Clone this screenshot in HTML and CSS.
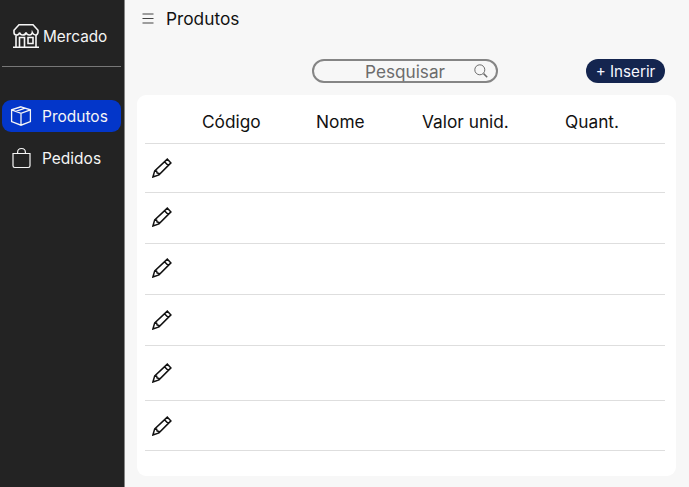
FILE: index.html
```html
<!DOCTYPE html>
<html lang="pt-BR">
<head>
<meta charset="utf-8">
<title>Produtos</title>
<link rel="stylesheet" href="styles.css">
</head>
<body>
<svg class="defs" aria-hidden="true">
  <symbol id="pencil" viewBox="0 0 20 20">
    <path d="M.9 19 2.7 12.9 15.3 1.1 18.9 4.9 7 16.9ZM2.7 12.9 4.6 13.2 5.2 15 6.8 15.3 7 16.9M12.5 3.7 16.2 7.5"/><path class="tip" d="M.9 19 1.5 16.9 3 18.4Z"/>
  </symbol>
</svg>
<div class="app">
  <aside class="sidebar">
    <div class="brand">
      <svg class="store" viewBox="0 0 26 25"><path d="M6 .8H20L25 6.3V8.5Q24.5 11 22.5 11T19.3 8.5Q19 11 16.4 11T13 8.5Q12.6 11 9.8 11T6.7 8.5Q6 11 3.5 11T1 8.5V6.3ZM3 11.5V23M23 11.5V23M0 23.3H26M6.5 23V13.5H11.5V23M15 13.5H20V19.5H15Z"/></svg>
      <span>Mercado</span>
    </div>
    <nav class="menu">
      <a class="item active">
        <svg class="box" viewBox="0 0 22 20"><path d="M11 .8 20.4 3.8V15.5L11 19.2 1.6 15.5V3.8ZM1.6 3.8 11 7.4 20.4 3.8M11 7.4V19.2M5.8 5.4 15.2 2.1"/></svg>
        <span>Produtos</span>
      </a>
      <a class="item">
        <svg class="bag" viewBox="0 0 22 22"><path d="M3 6.5H20V18.8Q20 20.5 18.3 20.5H4.7Q3 20.5 3 18.8ZM7.6 6.5V5.4Q7.6 1.5 11.5 1.5T15.4 5.4V6.5"/></svg>
        <span>Pedidos</span>
      </a>
    </nav>
  </aside>
  <main class="main">
    <header class="topbar">
      <svg class="burger" viewBox="0 0 12 11"><path d="M.5 1H11.5M.5 5.5H11.5M.5 10H11.5"/></svg>
      <h1>Produtos</h1>
    </header>
    <div class="tools">
      <div class="search">
        <span>Pesquisar</span>
        <svg class="lens" viewBox="0 0 14 14"><circle cx="5.8" cy="5.8" r="5"/><path class="handle" d="M9.6 9.6 13.2 13.2"/></svg>
      </div>
      <button class="insert">+ Inserir</button>
    </div>
    <section class="card">
      <div class="head"><span></span><span>Código</span><span>Nome</span><span>Valor unid.</span><span>Quant.</span></div>
      <div class="row r1"><svg class="pencil"><use href="#pencil"/></svg></div>
      <div class="row r2 high"><svg class="pencil"><use href="#pencil"/></svg></div>
      <div class="row r2 high"><svg class="pencil"><use href="#pencil"/></svg></div>
      <div class="row r2"><svg class="pencil"><use href="#pencil"/></svg></div>
      <div class="row r3"><svg class="pencil"><use href="#pencil"/></svg></div>
      <div class="row r4"><svg class="pencil"><use href="#pencil"/></svg></div>
    </section>
  </main>
</div>
</body>
</html>
```
FILE: styles.css
```css
* { box-sizing: border-box; }
body { margin: 0; font-family: Inter, "Liberation Sans", sans-serif; color: #111; }
svg { display: block; flex: none; fill: none; stroke: currentColor; }
.defs { display: none; }
.app { display: flex; width: 689px; height: 487px; background: #f7f7f7; overflow: hidden; }

.sidebar { width: 125px; flex: none; padding: 0 3px 0 2px; background: #232323; border-right: 1px solid #858585; color: #f5f5f5; font-size: 15.5px; }
.brand { display: flex; align-items: center; height: 67px; padding: 6px 0 0 11px; gap: 4px; border-bottom: 1px solid #777; font-size: 15.3px; }
.store { width: 26px; height: 25px; stroke-width: 1.6; }
.menu { padding-top: 33px; }
.item { display: flex; align-items: center; height: 32px; padding-left: 8px; gap: 10px; border-radius: 9px; }
.item + .item { margin-top: 10px; }
.active { background: #0336c9; }
.box { width: 22px; height: 20px; stroke-width: 1.3; }
.bag { width: 22px; height: 22px; stroke-width: 1.2; }

.main { flex: 1; padding: 0 13px 0 12px; }
.topbar { display: flex; align-items: center; height: 37px; padding-left: 5px; gap: 12px; }
.topbar h1 { margin: 0; font-size: 17.3px; font-weight: 400; }
.burger { width: 12px; height: 11px; stroke: #444; stroke-width: 1.2; }
.tools { display: flex; justify-content: space-between; align-items: center; height: 24px; margin: 22px 11px 12px 175px; }
.search { display: flex; align-items: center; justify-content: space-between; width: 186px; height: 24px; padding: 0 8px 0 51px; border: 2px solid #858585; border-radius: 12px; color: #6c6c6c; font-size: 17.2px; }
.lens { width: 14px; height: 14px; stroke-width: 1; }
.handle { stroke-width: 1.5; }
.insert { width: 79px; height: 24px; padding: 0; border: 0; border-radius: 12px; background: #14254f; color: #f5f7ff; font: 400 15.2px Inter, sans-serif; }

.card { height: 381px; padding: 0 11px 0 8px; border-radius: 9px; background: #fff; }
.head, .row { border-bottom: 1px solid #dedede; }
.head { display: grid; grid-template-columns: 57px 114px 106px 143px 1fr; align-items: center; height: 49px; padding-top: 5px; font-size: 17.3px; white-space: nowrap; }
.row { padding: 15px 0 0 7px; }
.r1 { height: 49px; padding-top: 14px; }
.r2 { height: 51px; }
.high { padding-top: 14px; }
.r3 { height: 55px; padding-top: 17px; }
.r4 { height: 50px; }
.pencil { width: 20px; height: 20px; stroke-width: 1.5; }
.tip { fill: currentColor; stroke: none; }
```
